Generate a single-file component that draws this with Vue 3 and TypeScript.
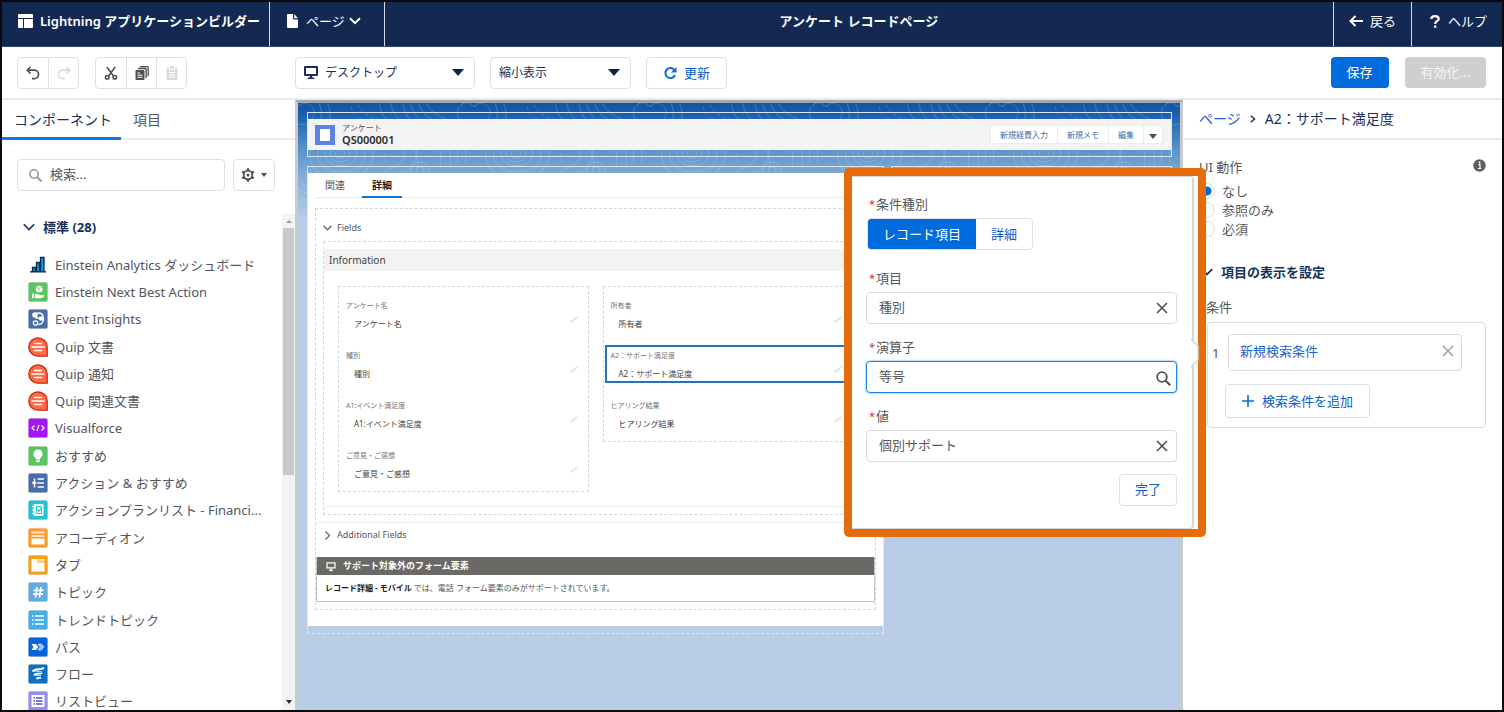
<script setup lang="ts">
import { ref } from 'vue'

interface PaletteItem {
  label: string
  icon: string
}
interface RecordField {
  label: string
  selected?: boolean
}

const tile = (color: string, body: string): string =>
  `<rect x="0.5" y="0.5" width="19" height="19" rx="1.5" fill="${color}" stroke="#000" stroke-opacity=".08"/>${body}`

const quip =
  '<path d="M10 .8a9.2 9.2 0 1 0 0 18.4h9.2V10A9.2 9.2 0 0 0 10 .8z" fill="#ff6a45" stroke="#c92a12" stroke-width="1.3"/>' +
  '<path d="M6.5 6.5h7M4 10h12M6.5 13.500h7" stroke="#fff" stroke-width="1.5" stroke-linecap="round"/>'

const palette: PaletteItem[] = [
  {
    label: 'Einstein Analytics ダッシュボード',
    icon:
      '<path d="M4.500 16.500v-4h3v4M8.500 16.500V7.500h3v9M12.500 16.500V2.500h3.500v14" fill="#0d9dda" stroke="#06254f" stroke-width="1.3"/>' +
      '<path d="M2 16.800h16" stroke="#06254f" stroke-width="1.4"/>',
  },
  {
    label: 'Einstein Next Best Action',
    icon: tile(
      '#5cc463',
      '<path d="M11 3.500l3.500 1.500v4L11 10.800 7.800 9V5z" fill="#fff"/><path d="M7.800 5.200L11 6.700l3.400-1.500M11 6.700v4" stroke="#5cc463" stroke-width=".6" fill="none"/><path d="M4 11.500h2v4.500H4zM6.800 12h3l2 1.200h4.400c0 2-2 3-4.200 3H6.800z" fill="#fff"/>',
    ),
  },
  {
    label: 'Event Insights',
    icon: tile(
      '#4a6da8',
      '<circle cx="7" cy="6" r="2.800" fill="#fff"/><path d="M8 4.500c5-2 7.500 1.500 7.500 5s-2 6-5 6M7 8.500c3 0 3.500 1 5 1.500" stroke="#fff" stroke-width="1.500" fill="none"/><circle cx="13" cy="9.500" r="2.300" fill="#fff"/><circle cx="7.500" cy="14" r="2.200" fill="none" stroke="#fff" stroke-width="1.300"/>',
    ),
  },
  { label: 'Quip 文書', icon: quip },
  { label: 'Quip 通知', icon: quip },
  { label: 'Quip 関連文書', icon: quip },
  {
    label: 'Visualforce',
    icon: tile(
      '#a316f2',
      '<path d="M6.500 7.500L4 10l2.500 2.500M13.500 7.500L16 10l-2.500 2.500M11 7l-2 6" fill="none" stroke="#fff" stroke-width="1.200"/>',
    ),
  },
  {
    label: 'おすすめ',
    icon: tile(
      '#5cc463',
      '<path d="M10 3.500a4.500 4.500 0 0 0-2.600 8.200l.6 1.800h4l.6-1.800A4.500 4.500 0 0 0 10 3.500zM8.200 14.300h3.600v1.200l-1 1H9.200l-1-1z" fill="#fff"/>',
    ),
  },
  {
    label: 'アクション & おすすめ',
    icon: tile(
      '#4a6da8',
      '<path d="M9.500 6h6.500M9.500 10h6.500M9.500 14h6.500M6.500 5.500v9M4.500 10h4" stroke="#fff" stroke-width="1.500"/><circle cx="6" cy="9.800" r="1.600" fill="#fff"/>',
    ),
  },
  {
    label: 'アクションプランリスト - Financi...',
    icon: tile(
      '#22c3d6',
      '<rect x="5.500" y="4" width="10" height="12" rx="1" fill="#fff"/><path d="M4 6.500h3M4 10h3M4 13.500h3" stroke="#fff" stroke-width="1.100"/><path d="M8.500 6.500h5v7h-5z" fill="none" stroke="#22c3d6"/><path d="M9.500 9.800l1.300 1.400 3.200-4" fill="none" stroke="#22c3d6" stroke-width="1.300"/>',
    ),
  },
  {
    label: 'アコーディオン',
    icon: tile('#fd9a2c', '<path d="M3.500 3.500h13v2h-13zM3.500 7h13v2h-13z" fill="#ffe4c4"/><path d="M3.500 10.500h13v6h-13z" fill="#fff"/>'),
  },
  {
    label: 'タブ',
    icon: tile('#f5a214', '<path d="M3.500 4h6v3.500h7v9h-13z" fill="#fff"/><path d="M10.300 4h6.200v2.700h-6.200z" fill="#ffe3ab"/>'),
  },
  {
    label: 'トピック',
    icon: tile('#5fade1', '<path d="M9 5L7.500 15.500M13 5l-1.500 10.500M5.500 8.300h10M5 12.200h10" stroke="#fff" stroke-width="1.700"/>'),
  },
  {
    label: 'トレンドトピック',
    icon: tile('#45aee6', '<path d="M4 6h1.500M7 6h9M4 10h1.500M7 10h9M4 14h1.500M7 14h9" stroke="#fff" stroke-width="1.300"/>'),
  },
  {
    label: 'パス',
    icon: tile(
      '#0563de',
      '<path d="M3.500 7h4.300l2.700 3-2.700 3H3.500l2-3z" fill="#fff"/><path d="M10 7h3.300l2.700 3-2.700 3H10l2.300-3z" fill="#8fbcf7" stroke="#fff" stroke-width=".6"/>',
    ),
  },
  {
    label: 'フロー',
    icon: tile(
      '#0c71c3',
      '<path d="M4.500 7.500c2.500-4 5.500-.5 11.500-3.500M6 11.300c2-2.800 4.500-.3 8-2.300M8.500 15c1-1.800 2.500-.3 4.500-1.500" fill="none" stroke="#fff" stroke-width="2"/>' +
        '<path d="M5.500 7.500c3-1.500 4 1 8 0M7.500 11.500c2-.8 3 .8 5.500 0" fill="none" stroke="#fff" stroke-width=".8"/>',
    ),
  },
  {
    label: 'リストビュー',
    icon: tile(
      '#958ef0',
      '<rect x="3.500" y="4" width="13" height="12" fill="#fff"/><path d="M5.500 7H7M8 7h6.500M5.500 10H7M8 10h6.500M5.500 13H7M8 13h6.500" stroke="#5a50b8" stroke-width="1.300"/>',
    ),
  },
]

const columns: RecordField[][] = [
  [{ label: 'アンケート名' }, { label: '種別' }, { label: 'A1:イベント満足度' }, { label: 'ご意見・ご感想' }],
  [{ label: '所有者' }, { label: 'A2：サポート満足度', selected: true }, { label: 'ヒアリング結果' }],
]

const behaviors = ['なし', '参照のみ', '必須']
const behavior = ref('なし')
const device = ref('desktop')
const zoomMode = ref('shrink')
const keyword = ref('')
const field = ref('種別')
const operator = ref('等号')
const fieldValue = ref('個別サポート')
</script>

<template>
  <div class="app">
    <header class="topbar">
      <div class="brand">
        <svg width="15" height="14" viewBox="0 0 15 14" fill="#fff">
          <path d="M1 0h13a1 1 0 0 1 1 1v3H0V1a1 1 0 0 1 1-1zM0 5h5v9H1a1 1 0 0 1-1-1zM6 5h9v8a1 1 0 0 1-1 1H6z" />
        </svg>
        <span>Lightning アプリケーションビルダー</span>
      </div>
      <button class="page-menu" type="button">
        <svg width="11" height="14" viewBox="0 0 11 14" fill="#fff">
          <path d="M1 0h5v4.500a1 1 0 0 0 1 1h4V13a1 1 0 0 1-1 1H1a1 1 0 0 1-1-1V1a1 1 0 0 1 1-1zM7.200 0L11 4.200H7.200z" />
        </svg>
        <span>ページ</span>
        <svg class="caret" width="12" height="8" viewBox="0 0 12 8" fill="none" stroke="#fff" stroke-width="2">
          <path d="M1 1.200l5 5 5-5" />
        </svg>
      </button>
      <h1 class="page-title">アンケート レコードページ</h1>
      <a class="nav back" href="#">
        <svg width="14" height="12" viewBox="0 0 14 12" fill="none" stroke="#fff" stroke-width="2">
          <path d="M14 6H2M6.500 1L1.500 6l5 5" />
        </svg>
        <span>戻る</span>
      </a>
      <a class="nav help" href="#">
        <svg width="10" height="13" viewBox="0 0 10 13" fill="none" stroke="#fff" stroke-width="2.200">
          <path d="M1.300 4C1.300 2.200 2.800 1.200 5 1.200S8.700 2.300 8.700 4C8.700 6 5.200 6 5.200 9" />
          <path d="M4 10.500h2.400v2.200H4z" fill="#fff" stroke="none" />
        </svg>
        <span>ヘルプ</span>
      </a>
    </header>

    <div class="toolbar">
      <div class="edit-tools">
        <div class="group">
          <button type="button" aria-label="元に戻す">
            <svg width="14" height="14" viewBox="0 0 14 14" fill="none" stroke="#514f4d" stroke-width="1.700">
              <path d="M4.500 1L1.200 4.200l3.300 3.300M1.500 4.200h6.800a4.200 4.200 0 0 1 0 8.400H6" />
            </svg>
          </button>
          <button type="button" aria-label="やり直し" disabled>
            <svg width="14" height="14" viewBox="0 0 14 14" fill="none" stroke="#dddbda" stroke-width="1.700">
              <path d="M9.500 1l3.300 3.200-3.300 3.300M12.500 4.200H5.700a4.200 4.200 0 0 0 0 8.400H8" />
            </svg>
          </button>
        </div>
        <div class="group">
          <button type="button" aria-label="切り取り">
            <svg width="14" height="14" viewBox="0 0 14 14" fill="none" stroke="#514f4d" stroke-width="1.500">
              <path d="M2.800 1l6.800 9.200M11.200 1L4.400 10.200" />
              <circle cx="3.200" cy="11.300" r="1.800" />
              <circle cx="10.800" cy="11.300" r="1.800" />
            </svg>
          </button>
          <button type="button" aria-label="コピー">
            <svg width="14" height="14" viewBox="0 0 14 14" fill="#514f4d">
              <path d="M1.500 4h7a1 1 0 0 1 1 1v8a1 1 0 0 1-1 1h-7a1 1 0 0 1-1-1V5a1 1 0 0 1 1-1z" />
              <path d="M2.500 7H5M2.500 9.200h5M2.500 11.300h5" stroke="#fff" />
              <path d="M3 2.500h7.500a.7.700 0 0 1 .7.700V12M5 .7h7.500a.7.700 0 0 1 .7.700V10" fill="none" stroke="#514f4d" stroke-width="1.300" />
            </svg>
          </button>
          <button type="button" aria-label="貼り付け" disabled>
            <svg width="14" height="14" viewBox="0 0 14 14" fill="#dddbda">
              <path d="M5 0h4v3H5z" />
              <path d="M2.500 1.500H4V4h6V1.500h1.500a1 1 0 0 1 1 1V13a1 1 0 0 1-1 1h-9a1 1 0 0 1-1-1V2.500a1 1 0 0 1 1-1z" />
              <path d="M4 6.500h6M4 8.800h6M4 11.100h6" stroke="#fff" />
            </svg>
          </button>
        </div>
      </div>
      <div class="view-tools">
        <div class="picker device">
          <svg class="lead" width="14" height="13" viewBox="0 0 14 13" fill="#16325c">
            <path d="M1 0h12a1 1 0 0 1 1 1v8a1 1 0 0 1-1 1H1a1 1 0 0 1-1-1V1a1 1 0 0 1 1-1zm1 2v6h10V2zM5.800 10h2.400v1.500h2V13H3.800v-1.500h2z" />
          </svg>
          <select v-model="device" aria-label="デバイス">
            <option value="desktop">デスクトップ</option>
          </select>
          <span class="arrow"></span>
        </div>
        <div class="picker zoom">
          <select v-model="zoomMode" aria-label="表示サイズ">
            <option value="shrink">縮小表示</option>
          </select>
          <span class="arrow"></span>
        </div>
        <button class="outline refresh" type="button">
          <svg width="14" height="14" viewBox="0 0 14 14" fill="none" stroke="#0a6ad6" stroke-width="2">
            <path d="M11.500 4.200A5 5 0 1 0 12 9" />
            <path d="M13.500 1v5.500H8z" fill="#0a6ad6" stroke="none" />
          </svg>
          <span>更新</span>
        </button>
      </div>
      <div class="save-tools">
        <button class="save" type="button">保存</button>
        <button class="activate" type="button" disabled>有効化...</button>
      </div>
    </div>

    <div class="workspace">
      <aside class="palette">
        <nav class="tabs">
          <a class="tab active" href="#">コンポーネント</a>
          <a class="tab" href="#">項目</a>
        </nav>
        <div class="search-row">
          <div class="search">
            <svg width="13" height="13" viewBox="0 0 13 13" fill="none" stroke="#9a9896" stroke-width="1.500">
              <circle cx="5" cy="5" r="4.200" />
              <path d="M8.200 8.200l4.300 4.300" stroke-width="2" />
            </svg>
            <input v-model="keyword" type="search" placeholder="検索..." aria-label="検索" />
          </div>
          <button class="outline gear" type="button" aria-label="設定">
            <svg width="14" height="14" viewBox="0 0 14 14" fill="none" stroke="#514f4d">
              <circle cx="7" cy="7" r="4.300" stroke-width="1.800" />
              <circle cx="7" cy="7" r="1.500" fill="#514f4d" stroke="none" />
              <path d="M7 .3v2.200M7 11.500v2.200M1.200 3.600l1.900 1.100M10.900 9.300l1.900 1.100M1.200 10.400l1.900-1.100M10.900 4.700l1.900-1.100" stroke-width="2.200" />
            </svg>
            <span class="arrow small"></span>
          </button>
        </div>
        <div class="list-area">
          <div class="list-body">
            <h2 class="group-title">
              <svg width="12" height="8" viewBox="0 0 12 8" fill="none" stroke="#16325c" stroke-width="1.600">
                <path d="M.8 1.200L6 6.500l5.200-5.300" />
              </svg>
              <span>標準 (28)</span>
            </h2>
            <ul class="items">
              <li v-for="item in palette" :key="item.label">
                <svg width="20" height="20" viewBox="0 0 20 20" fill="none" v-html="item.icon"></svg>
                <span>{{ item.label }}</span>
              </li>
            </ul>
          </div>
          <div class="scrollbar" aria-hidden="true">
            <span class="up"></span>
            <span class="thumb"></span>
            <span class="down"></span>
          </div>
        </div>
      </aside>

      <main class="canvas">
        <div class="stage">
          <svg class="contours" width="100%" height="160">
            <defs>
              <pattern id="contour" width="176" height="96" patternUnits="userSpaceOnUse">
                <g fill="none" stroke="#fff">
                  <ellipse cx="42" cy="51" rx="5" ry="4" />
                  <ellipse cx="42" cy="51" rx="10" ry="8" />
                  <ellipse cx="43" cy="51" rx="16" ry="12" />
                  <path d="M20 50c2-16 22-22 36-14s14 24 2 30-40 4-38-16zM12 52c0-20 24-32 46-24s22 34 4 44-50 4-50-20z" />
                  <path d="M0 4c8-10 22 2 14 12S-4 22-6 10M176 4c-8-10-20 0-16 10s12 10 16 6" />
                  <path d="M20-2c6 12 4 22-6 28M28-2c8 14 4 26-8 34M104-2c4 20 14 26 24 30s18 22 14 36" />
                  <path d="M112-2c4 18 14 22 24 26s18 22 16 40M120-2c4 16 14 18 22 22s18 18 18 40M128-2c4 12 12 14 20 18s20 16 20 44" />
                  <path d="M80 98c-8-16 4-30 16-34s14-22 4-34-20-20-18-32M88 98c-6-14 4-26 16-28s20-24 10-38-20-20-22-34" />
                  <path d="M96 98c0-14 12-14 20-24s2-30-6-40M0 78c20 14 44 12 60 20M0 86c14 8 30 8 40 12M176 78c-16-8-34-2-42 20M176 86c-12-4-24 2-30 12" />
                  <path d="M60 2c2 10 16 10 24 22s-2 34 8 40M52-2c0 14 12 18 20 28" stroke-dasharray="3 3" />
                  <circle cx="122" cy="68" r="4" />
                  <circle cx="122" cy="68" r="9" />
                </g>
              </pattern>
              <linearGradient id="fade" x1="0" y1="0" x2="0" y2="1">
                <stop offset="0" stop-color="#fff" stop-opacity=".22" />
                <stop offset="1" stop-color="#fff" stop-opacity=".12" />
              </linearGradient>
              <mask id="softly"><rect width="100%" height="160" fill="url(#fade)" /></mask>
            </defs>
            <rect width="100%" height="160" fill="url(#contour)" mask="url(#softly)" />
          </svg>

          <section class="region header-region">
            <div class="record-header">
              <span class="record-icon"></span>
              <div class="record-name">
                <span class="object">アンケート</span>
                <strong>QS000001</strong>
              </div>
              <div class="record-actions">
                <button type="button">新規経費入力</button>
                <button type="button">新規メモ</button>
                <button type="button">編集</button>
                <button class="more" type="button" aria-label="その他"><span class="arrow small"></span></button>
              </div>
            </div>
          </section>

          <div class="regions">
            <section class="region main-region">
              <div class="card">
                <nav class="card-tabs">
                  <a href="#">関連</a>
                  <a class="active" href="#">詳細</a>
                </nav>
                <div class="detail">
                  <h3 class="fold">
                    <svg width="9" height="6" viewBox="0 0 9 6" fill="none" stroke="#6b6966" stroke-width="1.400">
                      <path d="M.5.800l4 4 4-4" />
                    </svg>
                    Fields
                  </h3>
                  <div class="fields">
                    <h4 class="section-title">Information</h4>
                    <div class="columns">
                      <div v-for="(column, index) in columns" :key="index" class="column">
                        <div v-for="item in column" :key="item.label" class="field" :class="{ selected: item.selected }">
                          <span class="field-label">{{ item.label }}</span>
                          <span class="field-value">{{ item.label }}</span>
                          <svg class="pencil" width="8" height="7" viewBox="0 0 8 7" stroke="#e6e4e3" stroke-width="1.800">
                            <path d="M.5 6.500L7.500.800" />
                          </svg>
                        </div>
                      </div>
                    </div>
                  </div>
                  <h3 class="fold extra">
                    <svg width="9" height="9" viewBox="0 0 9 9" fill="none" stroke="#6b6966" stroke-width="1.400">
                      <path d="M2.500.500l4 4-4 4" />
                    </svg>
                    Additional Fields
                  </h3>
                  <div class="notice">
                    <div class="notice-title">
                      <svg width="10" height="9" viewBox="0 0 10 9" fill="none" stroke="#fff" stroke-width="1.200">
                        <path d="M1 .800h8v5H1zM5 6v2M3 8.300h4" />
                      </svg>
                      サポート対象外のフォーム要素
                    </div>
                    <p><strong>レコード詳細 - モバイル</strong> では、電話 フォーム要素のみがサポートされています。</p>
                  </div>
                </div>
              </div>
            </section>
            <section class="region side-region"></section>
          </div>
        </div>
      </main>

      <aside class="properties">
        <nav class="crumbs">
          <a href="#">ページ</a>
          <svg width="6" height="8" viewBox="0 0 6 8" fill="none" stroke="#16325c" stroke-width="1.500"><path d="M.8.800L4.500 4 .8 7.200" /></svg>
          <span>A2：サポート満足度</span>
        </nav>
        <div class="props-body">
          <svg class="info" width="13" height="13" viewBox="0 0 13 13">
            <circle cx="6.500" cy="6.500" r="6.200" fill="#605e5c" />
            <path d="M5.500 5.700h1.500v3.800M5 9.500h3.200" stroke="#fff" stroke-width="1.200" fill="none" />
            <circle cx="6.500" cy="3.500" r="1" fill="#fff" />
          </svg>
          <fieldset class="behavior">
            <legend>UI 動作</legend>
            <label v-for="item in behaviors" :key="item">
              <input v-model="behavior" type="radio" name="behavior" :value="item" />
              <span>{{ item }}</span>
            </label>
          </fieldset>
          <h2 class="visibility">
            <svg width="12" height="8" viewBox="0 0 12 8" fill="none" stroke="#16325c" stroke-width="1.800">
              <path d="M.8 1.200L6 6.500l5.200-5.300" />
            </svg>
            <span>項目の表示を設定</span>
          </h2>
          <h3 class="filters-title">条件</h3>
          <div class="filters">
            <div class="filter">
              <span class="number">1</span>
              <div class="filter-box">
                <a href="#">新規検索条件</a>
                <button class="icon-button" type="button" aria-label="削除">
                  <svg width="12" height="12" viewBox="0 0 12 12" stroke="#a3a19f" stroke-width="1.500"><path d="M1 1l10 10M11 1L1 11" /></svg>
                </button>
              </div>
            </div>
            <button class="outline add" type="button">
              <svg width="12" height="12" viewBox="0 0 12 12" stroke="#0a6ad6" stroke-width="1.600"><path d="M6 0v12M0 6h12" /></svg>
              <span>検索条件を追加</span>
            </button>
          </div>
        </div>
      </aside>
    </div>

    <div class="highlight">
      <form class="popover" @submit.prevent>
        <svg class="nub" width="8" height="30" viewBox="0 0 8 30" fill="#fff" stroke="#d8d6d4" stroke-width="1.500">
          <path d="M0 -1v2l7 7v14l-7 7v2" />
        </svg>
        <span class="form-label"><i>*</i>条件種別</span>
        <div class="toggle">
          <button class="on" type="button">レコード項目</button>
          <button type="button">詳細</button>
        </div>
        <label class="form-label" for="field"><i>*</i>項目</label>
        <div class="lookup">
          <input id="field" v-model="field" type="text" />
          <button class="icon-button" type="button" aria-label="項目をクリア">
            <svg width="12" height="12" viewBox="0 0 12 12" stroke="#514f4d" stroke-width="1.600"><path d="M1 1l10 10M11 1L1 11" /></svg>
          </button>
        </div>
        <label class="form-label" for="operator"><i>*</i>演算子</label>
        <div class="lookup focused">
          <input id="operator" v-model="operator" type="text" />
          <button class="icon-button" type="button" aria-label="演算子を検索">
            <svg width="15" height="15" viewBox="0 0 15 15" fill="none" stroke="#514f4d" stroke-width="1.800">
              <circle cx="6" cy="6" r="4.800" />
              <path d="M9.500 9.500l4.700 4.700" stroke-width="2.200" />
            </svg>
          </button>
        </div>
        <label class="form-label" for="value"><i>*</i>値</label>
        <div class="lookup">
          <input id="value" v-model="fieldValue" type="text" />
          <button class="icon-button" type="button" aria-label="値をクリア">
            <svg width="12" height="12" viewBox="0 0 12 12" stroke="#514f4d" stroke-width="1.600"><path d="M1 1l10 10M11 1L1 11" /></svg>
          </button>
        </div>
        <button class="outline done" type="button">完了</button>
      </form>
    </div>
  </div>
</template>

<style>
body {
  margin: 0;
  overflow: hidden;
}
</style>

<style scoped>
.app,
.app * {
  box-sizing: border-box;
}
.app {
  position: relative;
  display: flex;
  flex-direction: column;
  height: 100vh;
  border: 2px solid #0b0b0b;
  background: #fff;
  color: #54565b;
  font-family: 'Noto Sans', 'Noto Sans CJK JP', sans-serif;
  font-size: 13px;
  line-height: 18px;
}
button,
input,
select {
  margin: 0;
  padding: 0;
  border: 0;
  background: none;
  color: inherit;
  font: inherit;
}
a {
  color: inherit;
  text-decoration: none;
}
h1,
h2,
h3,
h4,
p,
ul,
fieldset {
  margin: 0;
  padding: 0;
  border: 0;
  font-size: inherit;
  font-weight: inherit;
  list-style: none;
}
svg {
  display: block;
  flex: none;
}
.arrow {
  width: 0;
  height: 0;
  border: 6px solid transparent;
  border-top: 7px solid #0b2448;
  border-bottom: 0;
}
.arrow.small {
  border-width: 5px 4px 0;
  border-top-color: #514f4d;
}

/* top bar */
.topbar {
  display: flex;
  flex: none;
  height: 45px;
  padding-bottom: 6px;
  border-bottom: 1px solid #34466a;
  background: #132952;
  color: #fff;
}
.topbar > * {
  display: flex;
  align-items: center;
  margin-bottom: -6px;
  padding-bottom: 6px;
}
.brand {
  gap: 7px;
  padding-left: 16px;
  padding-right: 9px;
  border-right: 1px solid #d5dae2;
  font-weight: 600;
}
.page-menu {
  gap: 8px;
  padding: 0 23px 6px 17px;
  border-right: 1px solid #d5dae2;
}
.caret {
  margin-left: -4px;
}
.page-title {
  flex: 1;
  justify-content: center;
  font-weight: 700;
}
.nav {
  gap: 7px;
  border-left: 1px solid #d5dae2;
}
.back {
  padding-left: 15px;
  padding-right: 15px;
}
.help {
  gap: 8px;
  padding-left: 18px;
  padding-right: 15px;
}

/* toolbar */
.toolbar {
  display: flex;
  flex: none;
  align-items: center;
  height: 53px;
  border-bottom: 2px solid #ebeaea;
}
.edit-tools {
  display: flex;
  gap: 16px;
  width: 293px;
  padding-left: 15px;
}
.group {
  display: flex;
  border: 1px solid #dddfe6;
  border-radius: 4px;
}
.group button {
  display: grid;
  place-items: center;
  width: 30px;
  height: 30px;
}
.group button + button {
  border-left: 1px solid #dddfe6;
}
.view-tools {
  display: flex;
  flex: 1;
  gap: 15px;
}
.picker {
  position: relative;
  display: flex;
  align-items: center;
  height: 32px;
  border: 1px solid #dddfe6;
  border-radius: 4px;
  color: #16325c;
  font-size: 12px;
}
.picker select {
  width: 100%;
  height: 100%;
  padding-left: 8px;
  appearance: none;
}
.picker .lead {
  margin-left: 8px;
}
.device {
  width: 180px;
}
.device select {
  padding-left: 7px;
}
.zoom {
  width: 141px;
}
.picker .arrow {
  position: absolute;
  right: 10px;
  pointer-events: none;
}
.outline {
  display: flex;
  align-items: center;
  justify-content: center;
  height: 32px;
  border: 1px solid #dddfe6;
  border-radius: 4px;
  background: #fff;
  color: #0a5fd0;
}
.refresh {
  gap: 7px;
  padding: 0 16px;
}
.save-tools {
  display: flex;
  gap: 16px;
  padding-right: 16px;
}
.save,
.activate {
  height: 31px;
  padding: 0 16px 2px;
  border-radius: 4px;
  background: #006bdc;
  color: #fff;
}
.activate {
  background: #d0cfcd;
  color: #f6f6f5;
}

/* workspace */
.workspace {
  display: grid;
  flex: 1;
  grid-template-columns: 293px minmax(0, 1fr) 319px;
  min-height: 0;
}
.palette {
  display: flex;
  flex-direction: column;
  min-height: 0;
}
.tabs {
  display: flex;
  flex: none;
  height: 40px;
  border-bottom: 2px solid #ebeaea;
  font-size: 14px;
}
.tab {
  height: 40px;
  padding: 0 12px;
  line-height: 40px;
}
.tab.active {
  padding: 0 9px 0 12px;
  border-bottom: 3px solid #0b7ae6;
  color: #16325c;
}
.search-row {
  display: flex;
  flex: none;
  gap: 8px;
  padding: 19px 20px 0 15px;
}
.search {
  display: flex;
  flex: 1;
  align-items: center;
  gap: 8px;
  height: 32px;
  padding-left: 11px;
  border: 1px solid #dddfe6;
  border-radius: 4px;
}
.search input {
  width: 100%;
  min-width: 0;
  padding-bottom: 2px;
}
.search input::placeholder {
  color: #54565b;
  opacity: 1;
}
.gear {
  gap: 6px;
  width: 42px;
}
.gear .arrow {
  border-width: 4px 3px 0;
}
.list-area {
  display: flex;
  flex: 1;
  min-height: 0;
  margin-top: 23px;
  overflow: hidden;
}
.list-body {
  flex: 1;
  min-width: 0;
  padding-left: 21px;
}
.group-title {
  display: flex;
  align-items: center;
  gap: 8px;
  height: 26px;
  color: #16325c;
  font-weight: 700;
}
.items {
  display: flex;
  flex-direction: column;
  height: 464px;
  margin-top: 11px;
}
.items li {
  display: flex;
  flex: 1;
  align-items: center;
  gap: 7px;
  padding-left: 5px;
  white-space: nowrap;
}
.scrollbar {
  display: flex;
  flex-direction: column;
  align-items: center;
  width: 13px;
  background: #f3f3f3;
}
.scrollbar .up {
  margin: 6px 0 5px;
  border: 3px solid transparent;
  border-top: 0;
  border-bottom: 3px solid #9a9a9a;
}
.scrollbar .thumb {
  width: 11px;
  height: 247px;
  background: #c8c8c8;
}
.scrollbar .down {
  margin: auto 0 6px;
  border: 3px solid transparent;
  border-top: 4px solid #2c2c2c;
  border-bottom: 0;
}

/* canvas */
.canvas {
  display: flex;
  min-height: 0;
  border: 3px solid #c7cacf;
  border-top-color: #a5a9af;
  border-bottom: 0;
  overflow: hidden;
}
.stage {
  position: relative;
  flex: 1;
  min-width: 0;
  padding: 9px 8px 0 9px;
  background: #b9cce5 linear-gradient(#1353a3 0, #1b5faf 12px, #5b95ca 48px, #82abd7 72px, #b9cce5 116px);
}
.contours {
  position: absolute;
  top: 0;
  left: 0;
}
.region {
  position: relative;
  padding: 6px 0;
  border: 1px solid #dce7f4;
}
.header-region {
  margin-bottom: 9px;
}
.record-header {
  display: flex;
  align-items: center;
  height: 31px;
  padding: 0 8px 0 7px;
  background: #f3f3f3;
}
.record-icon {
  width: 20px;
  height: 20px;
  border: 4px solid #5c82e6;
  border-width: 4px 5px;
  background: #fff;
}
.record-name {
  display: flex;
  flex: 1;
  flex-direction: column;
  padding-left: 7px;
  font-size: 8px;
  line-height: 10px;
}
.record-name strong {
  color: #2b2826;
  font-size: 11px;
  font-weight: 600;
  line-height: 14px;
}
.record-actions {
  display: flex;
  color: #3c6ea8;
  font-size: 8px;
  line-height: 17px;
}
.record-actions button {
  height: 19px;
  padding: 0 9px;
  border: 1px solid #ececec;
  background: #fff;
}
.record-actions button + button {
  border-left: 0;
}
.record-actions .more {
  display: grid;
  place-items: center;
  padding: 3px 5px 0;
}
.regions {
  display: grid;
  grid-template-columns: 577fr 281fr;
  align-items: start;
  gap: 7px;
}
.side-region {
  height: 240px;
}
.main-region {
  border-bottom-style: dashed;
}
.card {
  padding: 0 7px 16px;
  border-bottom: 1px solid #c4cbd6;
  background: #fff;
}
.card-tabs {
  display: flex;
  gap: 7px;
  height: 25px;
  margin-bottom: 10px;
  border-bottom: 1px solid #ebebeb;
  font-size: 10px;
  line-height: 24px;
}
.card-tabs a {
  height: 25px;
  padding: 0 10px;
}
.card-tabs .active {
  border-bottom: 2px solid #0b74d8;
  color: #1d1b1a;
  font-weight: 700;
}
.detail {
  padding-bottom: 7px;
  border: 1px dashed #d3d7e0;
}
.fold {
  display: flex;
  align-items: center;
  gap: 5px;
  height: 32px;
  padding: 5px 0 0 7px;
  font-size: 9px;
}
.fields {
  margin: 0 7px 7px;
  padding: 7px 0;
  border: 1px dashed #d3d7e0;
}
.section-title {
  padding-left: 5px;
  background: #f3f3f3;
  color: #3e3e3c;
  font-size: 10px;
  line-height: 22px;
}
.columns {
  display: grid;
  grid-template-columns: 1fr 1fr;
  align-items: start;
  gap: 14px;
  padding: 15px 14px 14px;
  border-bottom: 1px solid #ebebeb;
}
.column {
  display: grid;
  gap: 12px;
  padding: 8px 1px 8px;
  border: 1px dashed #d3d7e0;
}
.field {
  position: relative;
  display: flex;
  flex-direction: column;
  gap: 8px;
  height: 38px;
  padding: 4px 4px;
  border: 2px solid transparent;
  font-size: 7px;
  line-height: 10px;
}
.field.selected {
  border-color: #2574b5;
}
.field-label {
  color: #757371;
}
.field-value {
  padding-left: 8px;
  color: #3e3e3c;
  font-size: 8px;
}
.pencil {
  position: absolute;
  right: 7px;
  bottom: 8px;
}
.extra {
  height: 28px;
  margin-bottom: 7px;
  padding-top: 0;
  padding-bottom: 3px;
  border-top: 1px solid #ebebeb;
}
.notice {
  border: 1px solid #c4c4c4;
  border-top: 0;
  font-size: 8px;
}
.notice-title {
  display: flex;
  align-items: center;
  gap: 7px;
  padding-left: 9px;
  background: #6a6965;
  color: #fff;
  font-size: 9px;
  font-weight: 700;
}
.notice p {
  padding-left: 8px;
  line-height: 26px;
}
.notice strong {
  color: #1d1b1a;
}

/* properties */
.crumbs {
  display: flex;
  align-items: center;
  gap: 9px;
  height: 40px;
  padding: 0 16px;
  border-bottom: 2px solid #ebeaea;
  color: #16325c;
  font-size: 14px;
}
.crumbs a {
  color: #1b62cf;
}
.props-body {
  position: relative;
  padding: 18px 16px 0 16px;
}
.behavior legend {
  padding: 0 0 5px;
}
.behavior label {
  display: flex;
  align-items: center;
  gap: 7px;
  height: 19px;
}
.behavior input {
  width: 16px;
  height: 16px;
  border: 1px solid #dddbda;
  border-radius: 50%;
  appearance: none;
}
.behavior input:checked {
  background: radial-gradient(circle, #006bdc 4px, #fff 5px);
}
.info {
  position: absolute;
  top: 19px;
  right: 16px;
}
.visibility {
  display: flex;
  align-items: center;
  gap: 8px;
  margin: 25px 0 17px;
  padding-left: 2px;
  color: #16325c;
  font-weight: 700;
}
.filters-title {
  margin-bottom: 6px;
  padding-left: 7px;
}
.filters {
  margin-left: 8px;
  padding: 11px 23px 9px 4px;
  border: 1px solid #dddbda;
  border-radius: 4px;
}
.filter {
  display: flex;
  align-items: center;
  gap: 8px;
}
.number {
  width: 8px;
}
.filter-box {
  display: flex;
  flex: 1;
  align-items: center;
  justify-content: space-between;
  height: 37px;
  padding: 0 7px 3px 11px;
  border: 1px solid #dddbda;
  border-radius: 4px;
  color: #1b62cf;
}
.add {
  gap: 8px;
  height: 34px;
  margin: 13px 0 0 13px;
  padding: 0 16px;
}

/* condition popover */
.highlight {
  position: absolute;
  top: 166px;
  right: 296px;
  width: 362px;
  padding-right: 4px;
  border: 8px solid #e46c0a;
  border-radius: 5px;
  background: #fff;
}
.popover {
  position: relative;
  display: flex;
  flex-direction: column;
  padding: 18px 15px 22px 14px;
  border: solid #d8d6d4;
  border-width: 1px 2px 1px 0;
  border-radius: 0 4px 4px 0;
}
.nub {
  position: absolute;
  top: 161px;
  right: -7px;
}
.form-label {
  display: flex;
  gap: 1px;
  margin-bottom: 5px;
  padding-left: 3px;
}
.form-label i {
  color: #d0342c;
  font-size: 11px;
  font-style: normal;
  line-height: 18px;
}
.toggle {
  display: flex;
  align-self: flex-start;
  margin: 0 0 19px 1px;
  border: 1px solid #dddfe6;
  border-radius: 4px;
  color: #0a5fd0;
}
.toggle button {
  height: 30px;
  padding: 0 15px;
}
.toggle .on {
  border-radius: 3px 0 0 3px;
  background: #006bdc;
  color: #fff;
}
.lookup {
  position: relative;
  margin-bottom: 14px;
}
.lookup input {
  display: block;
  width: 100%;
  height: 32px;
  padding: 0 36px 4px 12px;
  border: 1px solid #dddbda;
  border-radius: 4px;
}
.lookup.focused input {
  border-color: #1b83e8;
  box-shadow: 0 0 2px #1b83e8;
}
.icon-button {
  display: grid;
  place-items: center;
  width: 12px;
  height: 12px;
}
.lookup .icon-button {
  position: absolute;
  top: 10px;
  right: 9px;
}
.done {
  align-self: flex-end;
  margin-top: -2px;
  padding: 0 15px 3px;
}
</style>
